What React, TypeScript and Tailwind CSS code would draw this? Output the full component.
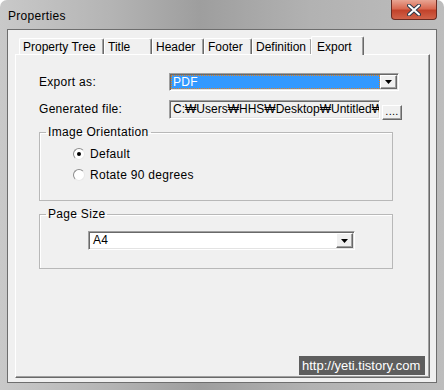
import React from 'react';

const font = { fontFamily: '"Liberation Sans", Arial, sans-serif' };

// sunken 3D border used by edit fields and combo boxes
const sunken = 'border border-t-[#a0a0a0] border-l-[#a0a0a0] border-b-white border-r-white shadow-[inset_1px_1px_0_#696969,inset_-1px_-1px_0_#e3e3e3]';
const raised = 'border border-t-white border-l-white border-b-[#696969] border-r-[#696969] shadow-[inset_-1px_-1px_0_#a0a0a0] bg-[#f0f0f0]';

const DropArrow = () => (
  <div className={`w-[17px] h-full ${raised} flex items-center justify-center`}>
    <svg width="7" height="4" viewBox="0 0 7 4">
      <path d="M0 0h7L3.5 4z" fill="#000" />
    </svg>
  </div>
);

const Radio = ({ checked, label }: { checked?: boolean; label: string }) => (
  <div className="flex items-center h-[20px]">
    <div className="w-[12px] h-[12px] rounded-full bg-white border border-t-[#8c8c8c] border-l-[#8c8c8c] border-b-[#e8e8e8] border-r-[#e8e8e8] flex items-center justify-center">
      {checked && <div className="w-[4px] h-[4px] rounded-full bg-black" />}
    </div>
    <span className="ml-[5px] text-[12px] text-black">{label}</span>
  </div>
);

const tabs = [
  { name: 'Property Tree', w: 'w-[85px]' },
  { name: 'Title', w: 'w-[48px]' },
  { name: 'Header', w: 'w-[52px]' },
  { name: 'Footer', w: 'w-[48px]' },
  { name: 'Definition', w: 'w-[60px]' },
];

export default function App() {
  return (
    <div className="w-[444px] h-[390px] relative overflow-hidden rounded-t-[7px] bg-[linear-gradient(90deg,#c9c9c9_0%,#b4b4b4_25%,#9e9e9e_45%,#b2b2b2_70%,#bdbdbd_100%)] flex flex-col tracking-[0.3px]" style={font}>
      {/* Title bar */}
      <div className="h-[29px] flex items-start shrink-0">
        <span className="text-[12px] text-black ml-[8px] mt-[7px]">Properties</span>
        <div className="ml-auto mr-[7px] w-[46px] h-[20px] rounded-b-[4px] border border-[#6b2b22] border-t-0 bg-[linear-gradient(180deg,#e8a593_0%,#d96a52_45%,#c2432b_55%,#d1634a_100%)] flex items-center justify-center">
          <svg width="14" height="12" viewBox="0 0 14 12">
            <path d="M2 1.5l10 9M12 1.5l-10 9" stroke="#2e3a4a" strokeWidth="4" strokeLinecap="round" />
            <path d="M2 1.5l10 9M12 1.5l-10 9" stroke="#ffffff" strokeWidth="2" strokeLinecap="round" />
          </svg>
        </div>
      </div>

      {/* Client area */}
      <div className="mx-[7px] mb-[7px] flex-1 border border-[#6e6e6e] bg-[#f0f0f0] pl-[7px] pr-[6px] pt-[6px] pb-[4px] flex flex-col">
        {/* Tab strip */}
        <div className="flex items-end h-[18px] pl-[4px] relative z-10 tracking-normal">
          {tabs.map((t) => (
            <div key={t.name} className={`${t.w} h-[16px] border-l border-t border-r border-l-white border-t-white border-r-[#696969] shadow-[inset_-1px_0_0_#a0a0a0] rounded-t-[2px] flex items-center pl-[3px] text-[12px] text-black whitespace-nowrap overflow-hidden`}>
              {t.name}
            </div>
          ))}
          <div className="w-[53px] h-[19px] -ml-[1px] -mb-[1px] bg-[#f0f0f0] border-l border-t border-r border-l-white border-t-white border-r-[#696969] shadow-[inset_-1px_0_0_#a0a0a0] rounded-t-[2px] flex items-start pt-[1px] pl-[5px] text-[12px] text-black">
            Export
          </div>
        </div>

        {/* Tab panel */}
        <div className="flex-1 border border-t-white border-l-white border-b-[#696969] border-r-[#696969] shadow-[inset_-1px_-1px_0_#a0a0a0] pl-[23px] pt-[18px] flex flex-col">
          <div className="flex items-center h-[18px]">
            <span className="w-[130px] text-[12px] text-black">Export as:</span>
            <div className={`w-[230px] h-[18px] ${sunken} bg-white flex p-[1px]`}>
              <div className="flex-1 bg-[#3399ff] outline outline-1 outline-dotted outline-[#e08020] -outline-offset-1 text-white text-[12px] leading-[14px] pl-[2px]">PDF</div>
              <DropArrow />
            </div>
          </div>

          <div className="flex items-start h-[20px] mt-[9px]">
            <span className="w-[130px] text-[12px] text-black leading-[18px]">Generated file:</span>
            <div className={`w-[211px] shrink-0 h-[19px] ${sunken} bg-[#f0f0f0] text-[12px] leading-[16px] pl-[3px] overflow-hidden whitespace-nowrap text-black tracking-normal`}>
              C:₩Users₩HHS₩Desktop₩Untitled₩
            </div>
            <div className={`ml-[2px] mt-[5px] w-[20px] h-[15px] shrink-0 ${raised} text-[11px] leading-[10px] text-black flex justify-center`}>....</div>
          </div>

          <fieldset className="mt-[5px] w-[354px] h-[76px] border border-[#b8b8b8] shadow-[inset_1px_1px_0_#fff] px-0">
            <legend className="ml-[6px] px-[2px] text-[12px] leading-[14px] text-black">Image Orientation</legend>
            <div className="pl-[33px] pt-[5px] flex flex-col gap-[1px]">
              <Radio checked label="Default" />
              <Radio label="Rotate 90 degrees" />
            </div>
          </fieldset>

          <fieldset className="mt-[6px] w-[354px] h-[62px] border border-[#b8b8b8] shadow-[inset_1px_1px_0_#fff] px-0">
            <legend className="ml-[6px] px-[2px] text-[12px] leading-[14px] text-black">Page Size</legend>
            <div className="pl-[48px] pt-[10px]">
              <div className={`w-[267px] h-[19px] ${sunken} bg-white flex p-[1px]`}>
                <div className="flex-1 text-black text-[12px] leading-[15px] pl-[3px]">A4</div>
                <DropArrow />
              </div>
            </div>
          </fieldset>
        </div>
      </div>

      {/* watermark */}
      <div className="absolute left-[299px] top-[356px] w-[126px] h-[19px] bg-[#5e5e5e] text-white text-[13px] leading-[19px] pl-[3px] tracking-normal">
        http://yeti.tistory.com
      </div>
    </div>
  );
}
